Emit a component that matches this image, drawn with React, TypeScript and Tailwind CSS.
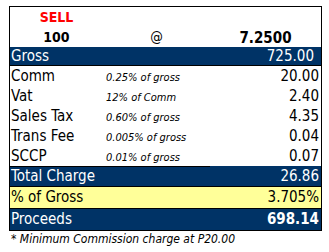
const NAVY = "bg-[#003366]";

type Fee = { label: string; note: string; value: string };

const fees: Fee[] = [
    { label: "Comm", note: "0.25% of gross", value: "20.00" },
    { label: "Vat", note: "12% of Comm", value: "2.40" },
    { label: "Sales Tax", note: "0.60% of gross", value: "4.35" },
    { label: "Trans Fee", note: "0.005% of gross", value: "0.04" },
    { label: "SCCP", note: "0.01% of gross", value: "0.07" },
];

function FeeRow({ fee, last }: { fee: Fee; last?: boolean }) {
    return (
        <div className="grid grid-cols-[93px_107px_111px] items-baseline h-[20px] relative">
            <span className="pl-[1px] text-[15px] leading-[20px]">{fee.label}</span>
            <span className="pl-[3px] text-[11px] italic">{fee.note}</span>
            <span className="pr-[2px] text-right text-[15px] leading-[20px]">{fee.value}</span>
            {last && <div className="absolute left-0 bottom-[-1px] w-[200px] h-px bg-black" />}
        </div>
    );
}

export default function App() {
    return (
        <div className="w-[329px] h-[252px] bg-white text-black pl-[9px] pt-[6px] font-['DejaVu_Sans_Condensed','DejaVu_Sans',sans-serif] font-stretch-condensed">
            <div className="w-[313px] border border-black">
                <div className="grid grid-cols-[93px_107px_111px] h-[20px] items-center">
                    <span className="text-center text-[14px] font-bold text-[#ff0000]">SELL</span>
                </div>
                <div className="grid grid-cols-[93px_107px_111px] h-[20px] items-start text-[14px] font-bold">
                    <span className="text-center">100</span>
                    <span className="text-center font-normal">@</span>
                    <span className="text-center text-[15px]">7.2500</span>
                </div>

                <div className={`flex justify-between items-center h-[19px] ${NAVY} text-white text-[15px] border-b border-black`}>
                    <span className="pl-[1px]">Gross</span>
                    <span className="pr-[7px]">725.00</span>
                </div>

                {fees.map((fee, i) => (
                    <FeeRow key={fee.label} fee={fee} last={i === fees.length - 1} />
                ))}

                <div className={`flex justify-between items-center h-[21px] ${NAVY} text-white text-[15px] border-b border-black`}>
                    <span className="pl-[1px]">Total Charge</span>
                    <span className="pr-[2px]">26.86</span>
                </div>
                <div className="flex justify-between items-center h-[22px] bg-[#ffff99] text-[15px] border-b border-black">
                    <span className="pl-[1px]">% of Gross</span>
                    <span className="pr-[2px]">3.705%</span>
                </div>
                <div className={`flex justify-between items-center h-[21px] ${NAVY} text-white text-[15px]`}>
                    <span className="pl-[1px]">Proceeds</span>
                    <span className="pr-[2px] font-bold">698.14</span>
                </div>
            </div>
            <p className="pl-[2px] text-[12px] italic leading-[16px]">* Minimum Commission charge at P20.00</p>
        </div>
    );
}
